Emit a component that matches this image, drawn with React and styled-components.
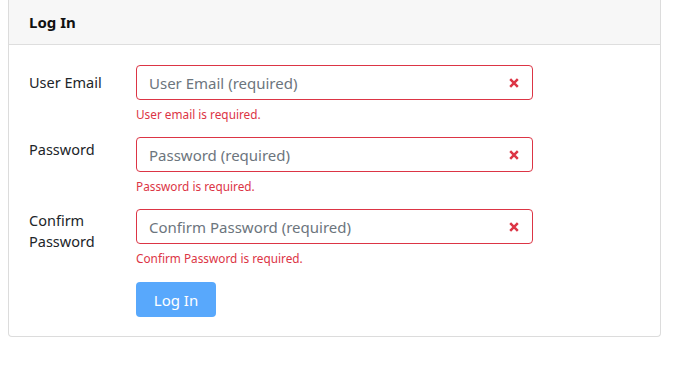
import React from "react";
import styled, { createGlobalStyle } from "styled-components";

const Global = createGlobalStyle`
  html, body { margin: 0; padding: 0; background: #fff; }
  body { font-family: "Noto Sans", "Open Sans", Arial, sans-serif; color: #212529; }
  * { box-sizing: border-box; }
`;

const Page = styled.div`
  padding: 0 24px 0 8px;
`;

const Card = styled.div`
  width: 653px;
  border: 1px solid #dcdcdc;
  border-top: none;
  border-radius: 0 0 4px 4px;
  background: #fff;
`;

const Header = styled.div`
  height: 45px;
  padding: 0 20px;
  display: flex;
  align-items: center;
  background: #f7f7f7;
  border-bottom: 1px solid #dedede;
  font-weight: 700;
  font-size: 15px;
  color: #111;
`;

const Body = styled.div`
  padding: 20px 20px 19px;
`;

const Row = styled.div`
  display: grid;
  grid-template-columns: 107px 397px;
  margin-bottom: ${(p) => p.$gap}px;
`;

const Label = styled.label`
  font-size: 14.5px;
  line-height: 21px;
  color: #212529;
  padding-top: ${(p) => p.$pad}px;
  width: ${(p) => (p.$wrap ? "80px" : "auto")};
`;

const Field = styled.div`
  display: flex;
  flex-direction: column;
`;

const InputWrap = styled.div`
  position: relative;
  height: 35px;
`;

const Input = styled.input`
  width: 100%;
  height: 35px;
  border: 1px solid #dc3545;
  border-radius: 4px;
  padding: 0 36px 0 12px;
  font-family: inherit;
  font-size: 15px;
  color: #495057;
  outline: none;
  &::placeholder { color: #6c757d; }
`;

const Icon = styled.svg`
  position: absolute;
  right: 14px;
  top: 13px;
`;

const Error = styled.div`
  margin-top: 5px;
  font-size: 11.8px;
  line-height: 18px;
  color: #dc3545;
`;

const Button = styled.button`
  width: 80px;
  height: 35px;
  border: none;
  border-radius: 4px;
  background: #58a8fc;
  color: #fff;
  font-family: inherit;
  font-size: 15px;
  padding: 0;
`;

const XIcon = () => (
  <Icon width="10" height="10" viewBox="0 0 10 10">
    <path d="M1.2 1.2 L8.8 8.8 M8.8 1.2 L1.2 8.8" stroke="#dc3545" strokeWidth="2.5" strokeLinecap="butt" />
  </Icon>
);

const fields = [
  { label: "User Email", ph: "User Email (required)", err: "User email is required.", pad: 7, gap: 14 },
  { label: "Password", ph: "Password (required)", err: "Password is required.", pad: 2, gap: 14 },
  { label: "Confirm Password", ph: "Confirm Password (required)", err: "Confirm Password is required.", pad: 1, gap: 15, wrap: true },
];

export default function App() {
  return (
    <Page>
      <Global />
      <Card>
        <Header>Log In</Header>
        <Body>
          {fields.map((f) => (
            <Row key={f.label} $gap={f.gap}>
              <Label $wrap={f.wrap} $pad={f.pad}>{f.label}</Label>
              <Field>
                <InputWrap>
                  <Input placeholder={f.ph} />
                  <XIcon />
                </InputWrap>
                <Error>{f.err}</Error>
              </Field>
            </Row>
          ))}
          <Row $gap={0}>
            <span />
            <div>
              <Button>Log In</Button>
            </div>
          </Row>
        </Body>
      </Card>
    </Page>
  );
}
